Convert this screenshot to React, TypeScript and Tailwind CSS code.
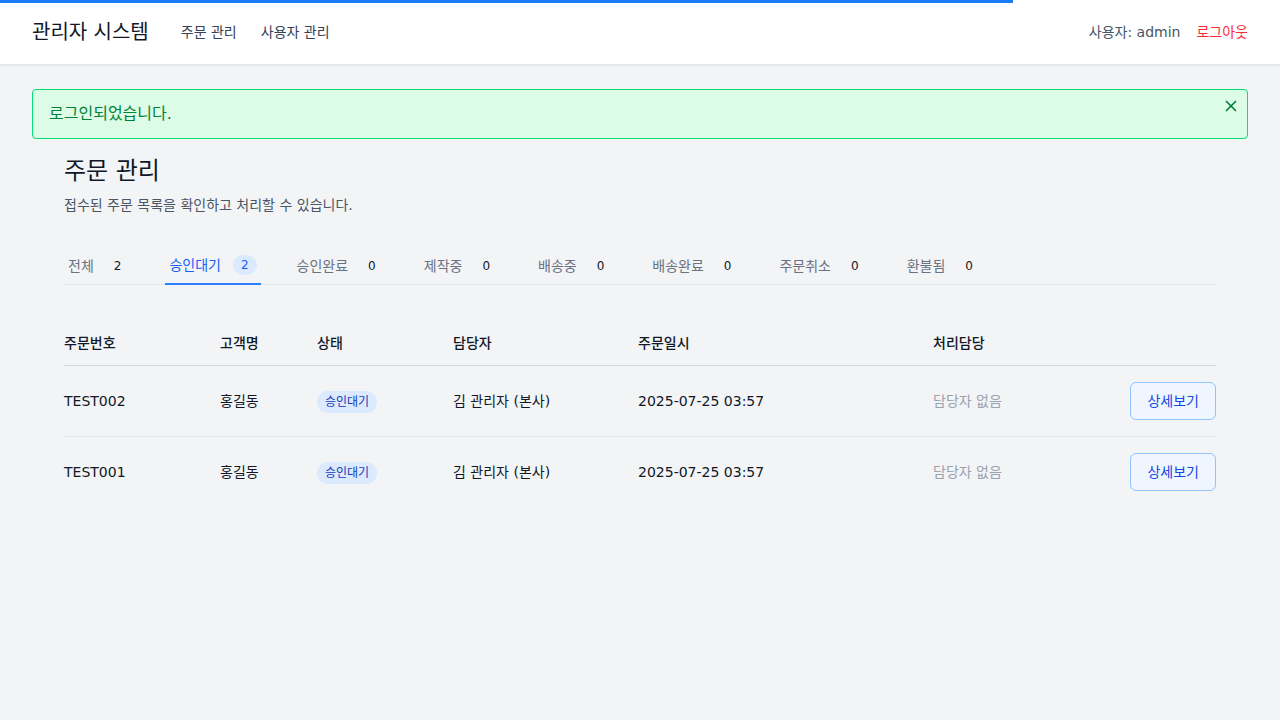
import { X } from "lucide-react";

const tabs = [
  { label: "전체", count: 2 },
  { label: "승인대기", count: 2, active: true },
  { label: "승인완료", count: 0 },
  { label: "제작중", count: 0 },
  { label: "배송중", count: 0 },
  { label: "배송완료", count: 0 },
  { label: "주문취소", count: 0 },
  { label: "환불됨", count: 0 },
];

const orders = [
  { id: "TEST002", customer: "홍길동", status: "승인대기", manager: "김 관리자 (본사)", date: "2025-07-25 03:57" },
  { id: "TEST001", customer: "홍길동", status: "승인대기", manager: "김 관리자 (본사)", date: "2025-07-25 03:57" },
];

export default function App() {
  return (
    <div className="min-h-screen bg-[#f3f4f6] font-['DejaVu_Sans','Noto_Sans_CJK_KR',sans-serif] text-gray-900">
      {/* Loading bar */}
      <div className="fixed top-0 left-0 z-10 h-[3px] w-[1013px] bg-[#1a7dff]" />

      {/* Header */}
      <header className="flex h-16 items-center justify-between bg-white px-8 shadow-[0_1px_3px_rgba(0,0,0,0.1)]">
        <div className="flex items-center gap-8">
          <span className="text-xl text-gray-900">관리자 시스템</span>
          <nav className="flex items-center gap-6 text-sm text-gray-700">
            <a>주문 관리</a>
            <a>사용자 관리</a>
          </nav>
        </div>
        <div className="flex items-center gap-4 text-sm">
          <span className="text-gray-600">사용자: admin</span>
          <a className="text-red-500">로그아웃</a>
        </div>
      </header>

      <main className="px-8 pt-[25px]">
        {/* Alert */}
        <div className="relative flex h-[50px] items-center rounded border border-green-400 bg-[#dcfce7] px-4 text-green-700">
          <span>로그인되었습니다.</span>
          <X className="absolute top-[7px] right-[7px] h-[18px] w-[18px] text-green-700" strokeWidth={2.2} />
        </div>

        <section className="px-8">
          <h1 className="mt-4 text-2xl text-gray-900">주문 관리</h1>
          <p className="mt-2 text-sm text-gray-600">접수된 주문 목록을 확인하고 처리할 수 있습니다.</p>

          {/* Tabs */}
          <div className="mt-10 flex gap-8 border-b border-gray-200">
            {tabs.map((t) => (
              <div
                key={t.label}
                className={
                  t.active
                    ? "-mb-px flex items-center gap-3 border-b-2 border-blue-500 px-1 pb-2 text-sm text-blue-600"
                    : "flex items-center gap-3 px-1 pb-2 text-sm text-gray-500"
                }
              >
                <span>{t.label}</span>
                <span
                  className={
                    t.active
                      ? "rounded-full bg-blue-100 px-2 text-xs leading-5 text-blue-600"
                      : "px-2 text-xs leading-5 text-gray-900"
                  }
                >
                  {t.count}
                </span>
              </div>
            ))}
          </div>

          {/* Table */}
          <table className="mt-9 w-full text-left text-sm">
            <thead>
              <tr className="border-b border-gray-300">
                <th className="w-[156px] py-3 font-medium text-gray-900">주문번호</th>
                <th className="w-[97px] py-3 font-medium text-gray-900">고객명</th>
                <th className="w-[136px] py-3 font-medium text-gray-900">상태</th>
                <th className="w-[185px] py-3 font-medium text-gray-900">담당자</th>
                <th className="w-[295px] py-3 font-medium text-gray-900">주문일시</th>
                <th className="py-3 font-medium text-gray-900">처리담당</th>
                <th className="py-3" />
              </tr>
            </thead>
            <tbody className="divide-y divide-gray-200">
              {orders.map((o) => (
                <tr key={o.id}>
                  <td className="py-4 text-gray-900">{o.id}</td>
                  <td className="py-4 text-gray-900">{o.customer}</td>
                  <td className="py-4">
                    <span className="rounded-full bg-blue-100 px-2 py-1 text-xs text-blue-800">{o.status}</span>
                  </td>
                  <td className="py-4 text-gray-900">{o.manager}</td>
                  <td className="py-4 text-gray-900">{o.date}</td>
                  <td className="py-4 text-gray-400">담당자 없음</td>
                  <td className="py-4 text-right">
                    <button className="h-[38px] rounded-md border border-blue-300 bg-blue-50 px-4 text-sm text-blue-700">
                      상세보기
                    </button>
                  </td>
                </tr>
              ))}
            </tbody>
          </table>
        </section>
      </main>
    </div>
  );
}
